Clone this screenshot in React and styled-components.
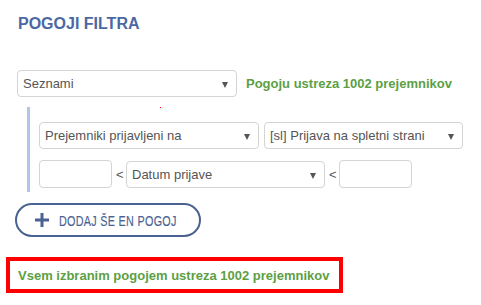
import React from "react";
import styled, { createGlobalStyle } from "styled-components";

const GlobalStyle = createGlobalStyle`
  body {
    margin: 0;
    background: #ffffff;
    font-family: "Liberation Sans", Arial, sans-serif;
  }
`;

const Page = styled.div`
  width: 481px;
  height: 305px;
  padding: 15px 0 0 0;
  box-sizing: border-box;
  overflow: hidden;
`;

const Title = styled.h2`
  margin: 0 0 0 18px;
  font-size: 16px;
  line-height: 18px;
  font-weight: bold;
  color: #4b68a3;
`;

const Row = styled.div`
  display: flex;
  align-items: center;
  gap: ${(p) => p.$gap || 5}px;
`;

const TopRow = styled(Row)`
  margin: 37px 0 0 17px;
  gap: 9px;
`;

const SelectBox = styled.div`
  position: relative;
  width: ${(p) => p.$w}px;
  height: 27px;
  box-sizing: border-box;
  border: 1px solid #d4d4d4;
  border-radius: 4px;
  padding: 0 0 0 5px;
  display: flex;
  align-items: center;
  font-size: 13px;
  color: #555555;
  background: #fff;
  &::after {
    content: "";
    position: absolute;
    right: 8px;
    top: 11px;
    border-left: 3.5px solid transparent;
    border-right: 3.5px solid transparent;
    border-top: 6px solid #555555;
  }
`;

const Input = styled.div`
  width: 73px;
  height: 28px;
  box-sizing: border-box;
  border: 1px solid #d4d4d4;
  border-radius: 4px;
  background: #fff;
`;

const Lt = styled.span`
  font-size: 13px;
  color: #555555;
  width: 6px;
`;

const Count = styled.span`
  font-size: 13px;
  font-weight: bold;
  color: #5c9f44;
  white-space: nowrap;
`;

const Group = styled.div`
  margin: 10px 0 0 27px;
  border-left: 3px solid #aec6ea;
  padding: 0 0 4px 9px;
  display: flex;
  flex-direction: column;
  gap: 11px;
`;

const Marker = styled.div`
  height: 4px;
  position: relative;
  &::before {
    content: "";
    position: absolute;
    left: 121px;
    top: 0;
    width: 1px;
    height: 1px;
    background: #ff0000;
  }
`;

const AddButton = styled.button`
  margin: 11px 0 0 15px;
  width: 186px;
  height: 34px;
  box-sizing: border-box;
  border: 2px solid #4a6291;
  border-radius: 17px;
  background: #fff;
  display: flex;
  align-items: center;
  gap: 10px;
  padding: 0 0 0 18px;
  color: #4a6291;
  font-family: "Liberation Sans Narrow", "Liberation Sans", sans-serif;
  font-size: 15px;
  white-space: nowrap;
  overflow: hidden;
  cursor: pointer;
  svg {
    flex-shrink: 0;
  }
`;

const Label = styled.span`
  display: inline-block;
  flex-shrink: 0;
  transform: scaleX(0.72);
  transform-origin: left center;
  letter-spacing: 0.4px;
  -webkit-text-stroke: 0.15px #4a6291;
`;

const Summary = styled.div`
  margin: 20px 0 0 6px;
  width: 337px;
  height: 36px;
  box-sizing: border-box;
  border: 4px solid #ff0000;
  padding: 0 0 0 8px;
  display: flex;
  align-items: center;
`;

function Plus() {
  return (
    <svg width="14" height="14" viewBox="0 0 14 14">
      <rect x="5.5" y="0" width="3" height="14" fill="#4a6291" />
      <rect x="0" y="5.5" width="14" height="3" fill="#4a6291" />
    </svg>
  );
}

export default function App() {
  return (
    <>
      <GlobalStyle />
      <Page>
        <Title>POGOJI FILTRA</Title>
        <TopRow>
          <SelectBox $w={220}>Seznami</SelectBox>
          <Count>Pogoju ustreza 1002 prejemnikov</Count>
        </TopRow>
        <Group>
          <Marker />
          <Row>
            <SelectBox $w={220}>Prejemniki prijavljeni na</SelectBox>
            <SelectBox $w={199}>[sl] Prijava na spletni strani</SelectBox>
          </Row>
          <Row $gap={4}>
            <Input />
            <Lt>&lt;</Lt>
            <SelectBox $w={199}>Datum prijave</SelectBox>
            <Lt>&lt;</Lt>
            <Input />
          </Row>
        </Group>
        <AddButton>
          <Plus />
          <Label>DODAJ ŠE EN POGOJ</Label>
        </AddButton>
        <Summary>
          <Count>Vsem izbranim pogojem ustreza 1002 prejemnikov</Count>
        </Summary>
      </Page>
    </>
  );
}
